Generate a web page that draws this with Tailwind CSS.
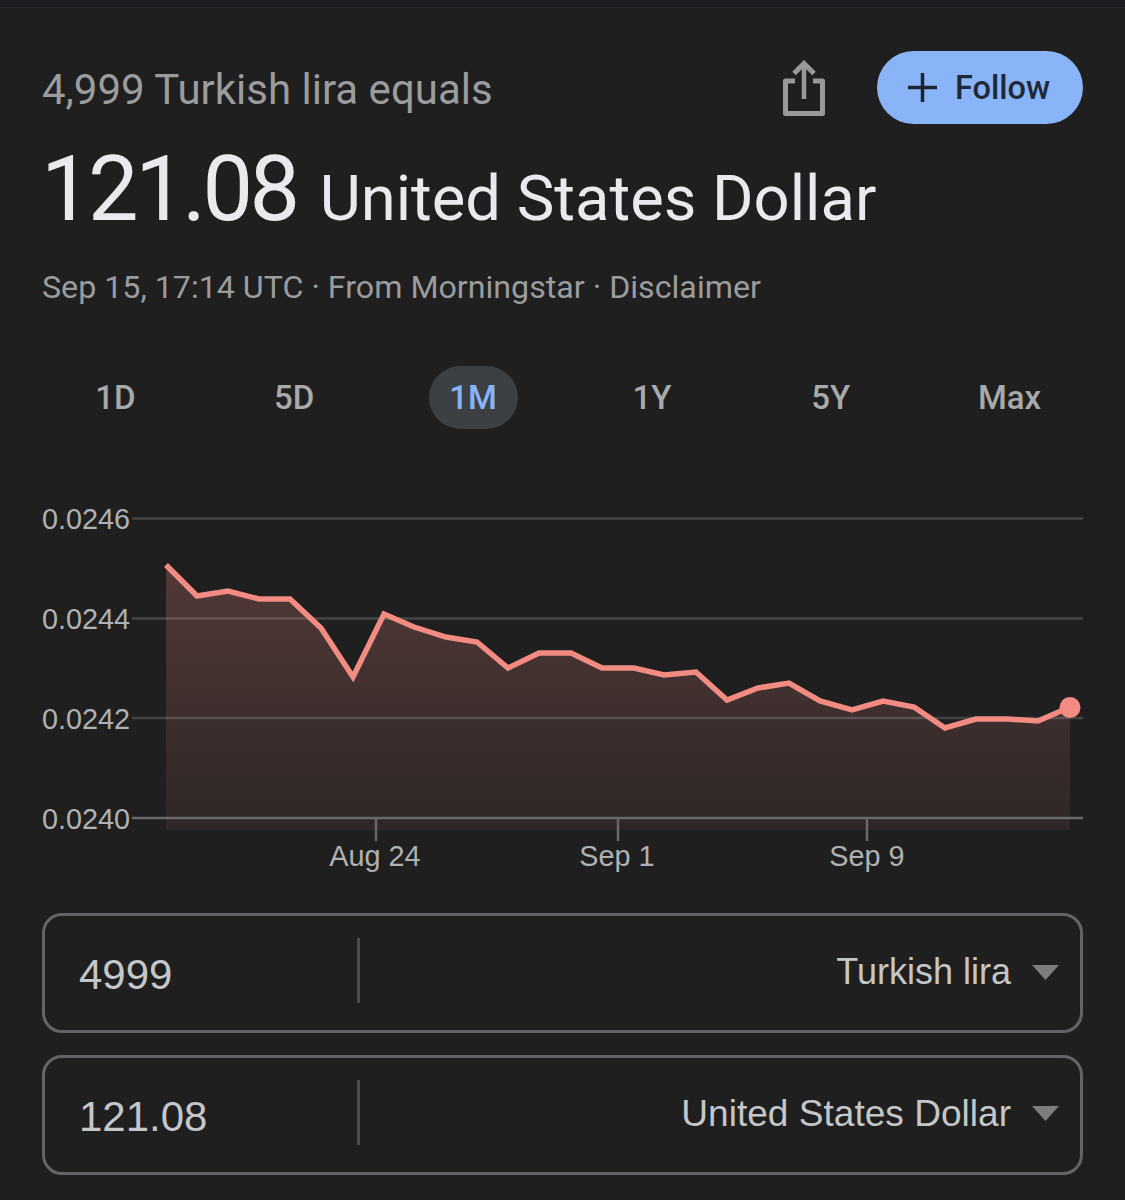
<!DOCTYPE html>
<html lang="en">
<head>
    <meta charset="UTF-8">
    <meta name="viewport" content="width=device-width, initial-scale=1.0">
    <title>4,999 Turkish lira equals</title>
    <script src="https://cdn.jsdelivr.net/npm/@tailwindcss/browser@4"></script>
</head>
<body class="bg-[#1f1f1f] h-[1200px] overflow-hidden font-['Roboto',sans-serif]">

    <!-- Top strip -->
    <div class="h-[8px] bg-[#1c1d20] border-b border-[#25262a]"></div>

    <div class="px-[42px]">
        <!-- Header -->
        <header class="flex items-center justify-between pt-[43px]">
            <p class="pt-[4px] text-[42px] leading-[69px] text-[#9b9c9e]">4,999 Turkish lira equals</p>
            <div class="flex items-center gap-[51px]">
                <svg class="w-[44px] h-[58px]" viewBox="0 0 44 58" fill="none" stroke="#999999">
                    <path d="M13 22H3.500V54.500H40.500V22H31" stroke-width="5" stroke-linejoin="round"/>
                    <path d="M22 40V5" stroke-width="4.500"/>
                    <path d="M12 14.500L22 4.500L32 14.500" stroke-width="5"/>
                </svg>
                <button class="flex items-center gap-[18px] w-[206px] h-[73px] pl-[31px] rounded-full bg-[#8ab4f8] text-[#1f2937] text-[32.500px] font-medium">
                    <svg class="w-[29px] h-[29px]" viewBox="0 0 29 29" stroke="#1c2430" stroke-width="3.500">
                        <path d="M0 14.500H29M14.500 0V29"/>
                    </svg>
                    <span class="pt-[2px]">Follow</span>
                </button>
            </div>
        </header>

        <!-- Result -->
        <h1 class="mt-[6px] flex items-baseline gap-[23px] h-[120px] leading-[120px] text-[#e8eaed]">
            <span class="text-[90px] tracking-[-3.500px] ml-[-1px]">121.08</span>
            <span class="text-[63.300px]">United States Dollar</span>
        </h1>
        <p class="mt-[14px] text-[32.200px] leading-[46px] text-[#9b9c9e]">Sep 15, 17:14 UTC · From Morningstar · Disclaimer</p>
    </div>

    <!-- Range tabs -->
    <nav class="mt-[56px] mx-[26px] grid grid-cols-6 text-[33px] font-medium text-[#a8a9aa]">
        <div class="flex justify-center"><span class="h-[63px] leading-[63px]">1D</span></div>
        <div class="flex justify-center"><span class="h-[63px] leading-[63px]">5D</span></div>
        <div class="flex justify-center"><span class="w-[89px] h-[63px] leading-[63px] text-center rounded-full bg-[#3c4043] text-[#8ab4f8]">1M</span></div>
        <div class="flex justify-center"><span class="h-[63px] leading-[63px]">1Y</span></div>
        <div class="flex justify-center"><span class="h-[63px] leading-[63px]">5Y</span></div>
        <div class="flex justify-center"><span class="h-[63px] leading-[63px]">Max</span></div>
    </nav>

    <!-- Chart -->
    <svg class="block mt-[71px] w-[1125px] h-[384px] font-['Liberation_Sans',sans-serif]" viewBox="0 500 1125 384">
        <defs>
            <linearGradient id="area" x1="0" y1="0" x2="0" y2="1">
                <stop offset="0" stop-color="#f28b82" stop-opacity="0.24"/>
                <stop offset="1" stop-color="#f28b82" stop-opacity="0.07"/>
            </linearGradient>
        </defs>
        <path fill="url(#area)" d="M166 565L197 596L228 591L259 599L290 599L321 628L353 677L384 614L414 627L446 637L477 642L508 668L539 653L571 653L602 668L634 668L664 675L696 672L727 700L758 688L789 683L820 701L852 710L883 701L914 707L945 728L976 719L1007 719L1038 721L1070 707V830H166Z"/>
        <g stroke="#ffffff" stroke-opacity="0.17" stroke-width="2.500">
            <path d="M132 518.500H1083M132 618.500H1083M132 718H1083"/>
        </g>
        <g stroke="#6b6868" stroke-width="2.500">
            <path d="M132 818H1083"/>
            <path d="M376 818V841M618 818V841M867 818V841"/>
        </g>
        <path fill="none" stroke="#f28b82" stroke-width="5.500" d="M166 565L197 596L228 591L259 599L290 599L321 628L353 677L384 614L414 627L446 637L477 642L508 668L539 653L571 653L602 668L634 668L664 675L696 672L727 700L758 688L789 683L820 701L852 710L883 701L914 707L945 728L976 719L1007 719L1038 721L1070 707"/>
        <circle cx="1070" cy="707.500" r="10.500" fill="#f28b82"/>
        <g fill="#b0b1b2" font-size="28.800">
            <text x="42" y="529">0.0246</text>
            <text x="42" y="629">0.0244</text>
            <text x="42" y="729">0.0242</text>
            <text x="42" y="829">0.0240</text>
            <text x="375" y="866" text-anchor="middle">Aug 24</text>
            <text x="617" y="866" text-anchor="middle">Sep 1</text>
            <text x="867" y="866" text-anchor="middle">Sep 9</text>
        </g>
    </svg>

    <!-- Converter fields -->
    <div class="mt-[29px] mx-[42px] flex flex-col gap-[22px] font-['Liberation_Sans',sans-serif] text-[#c4c6c8]">
        <div class="flex items-center h-[120px] rounded-[20px] border-[3px] border-[#626468]">
            <span class="w-[312px] pl-[34px] pt-[2px] text-[42px]">4999</span>
            <span class="w-[3px] h-[65px] mt-[-5px] bg-[#4b4c4f]"></span>
            <span class="flex-1 flex items-center justify-end gap-[21px] pr-[21px] mt-[-2px] text-[36px]">
                Turkish lira
                <svg class="w-[27px] h-[15px]" viewBox="0 0 27 15"><path d="M0 0H27L13.500 15Z" fill="#7d7d7d"/></svg>
            </span>
        </div>
        <div class="flex items-center h-[120px] rounded-[20px] border-[3px] border-[#626468]">
            <span class="w-[312px] pl-[34px] pt-[2px] text-[42px]">121.08</span>
            <span class="w-[3px] h-[65px] mt-[-5px] bg-[#4b4c4f]"></span>
            <span class="flex-1 flex items-center justify-end gap-[21px] pr-[21px] mt-[-2px] text-[37.100px]">
                United States Dollar
                <svg class="w-[27px] h-[15px]" viewBox="0 0 27 15"><path d="M0 0H27L13.500 15Z" fill="#7d7d7d"/></svg>
            </span>
        </div>
    </div>

</body>
</html>
